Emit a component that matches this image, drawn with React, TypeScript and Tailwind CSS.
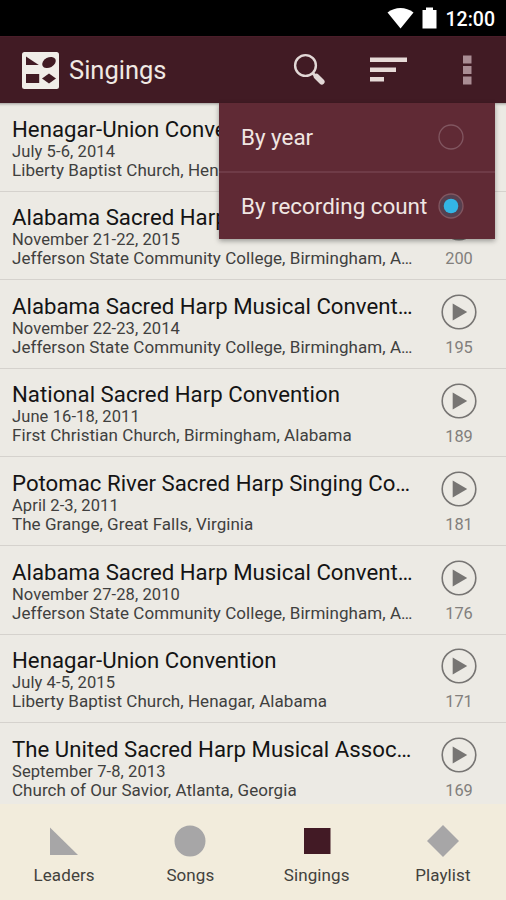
type Singing = {
  name: string;
  date: string;
  place: string;
  recordings: number;
};

const singings: Singing[] = [
  { name: 'Henagar-Union Convention', date: 'July 5-6, 2014', place: 'Liberty Baptist Church, Henagar, Alabama', recordings: 214 },
  { name: 'Alabama Sacred Harp Musical Convention', date: 'November 21-22, 2015', place: 'Jefferson State Community College, Birmingham, Alabama', recordings: 200 },
  { name: 'Alabama Sacred Harp Musical Convention', date: 'November 22-23, 2014', place: 'Jefferson State Community College, Birmingham, Alabama', recordings: 195 },
  { name: 'National Sacred Harp Convention', date: 'June 16-18, 2011', place: 'First Christian Church, Birmingham, Alabama', recordings: 189 },
  { name: 'Potomac River Sacred Harp Singing Convention', date: 'April 2-3, 2011', place: 'The Grange, Great Falls, Virginia', recordings: 181 },
  { name: 'Alabama Sacred Harp Musical Convention', date: 'November 27-28, 2010', place: 'Jefferson State Community College, Birmingham, Alabama', recordings: 176 },
  { name: 'Henagar-Union Convention', date: 'July 4-5, 2015', place: 'Liberty Baptist Church, Henagar, Alabama', recordings: 171 },
  { name: 'The United Sacred Harp Musical Association', date: 'September 7-8, 2013', place: 'Church of Our Savior, Atlanta, Georgia', recordings: 169 },
];

function StatusBar() {
  return (
    <div className="flex h-9 shrink-0 items-center justify-end bg-black pr-[11px] text-white">
      <svg className="h-[22px] w-[27px]" viewBox="0 0 27 22" fill="currentColor">
        <path d="M0.5 5.5C8 -0.5 19 -0.5 26.5 5.5L13.5 21.5Z" />
      </svg>
      <svg className="ml-2 h-[22px] w-[15px]" viewBox="0 0 15 22" fill="currentColor">
        <path d="M4 0.5H11V3H14.5V21.5H0.5V3H4Z" />
      </svg>
      <span className="ml-[9px] pt-[3px] text-[19.5px] leading-none font-medium">12:00</span>
    </div>
  );
}

function ActionBar() {
  return (
    <header className="flex h-[67px] shrink-0 items-center border-t border-[#4a1d29] bg-[#411b24] pl-[22px] text-[#f0e9e3]">
      <svg className="h-[37px] w-[37px]" viewBox="0 0 37 37">
        <rect width="37" height="37" rx="2.5" fill="#f0ede8" />
        <g fill="#411b24">
          <path d="M4 4.5L16.8 13H4Z" />
          <ellipse cx="27" cy="10.5" rx="7.2" ry="5" transform="rotate(-28 27 10.5)" />
          <path d="M4 22H17.2V31H4Z" />
          <path d="M20 26.5L27 21.5L34 26.5L27 31.5Z" />
        </g>
      </svg>
      <h1 className="ml-2.5 flex-1 pt-0.5 text-[25.5px] leading-none">Singings</h1>
      <svg className="h-[34px] w-[34px]" viewBox="0 0 34 34" fill="none" stroke="#e2d8d6">
        <circle cx="12.5" cy="12.5" r="10.4" strokeWidth="2.4" />
        <path d="M19.5 20L23.5 24" strokeWidth="3" />
        <path d="M23.5 23.5L28.8 28.8" strokeWidth="5.6" strokeLinecap="round" />
      </svg>
      <svg className="ml-[43px] h-[26px] w-[38px]" viewBox="0 0 38 26" fill="#e6dad7">
        <path d="M0 0.5H37V5H0ZM0 10.5H26V15H0ZM0 20H14V24.5H0Z" />
      </svg>
      <svg className="mr-[33px] ml-[55px] h-[30px] w-[10px]" viewBox="0 0 10 30" fill="#aa8d94">
        <path d="M0 0.5H8.5V8.5H0ZM0 11H8.5V19H0ZM0 21.5H8.5V29.5H0Z" />
      </svg>
    </header>
  );
}

function SingingRow({ singing }: { singing: Singing }) {
  return (
    <li className="flex h-[88.6px] shrink-0 border-b border-[#d5d2cd] pl-3">
      <div className="w-[404px] pt-[12.7px]">
        <h2 className="truncate pr-0.5 text-[22.2px] leading-[26px] tracking-[0.02px] text-[#141414]">{singing.name}</h2>
        <p className="truncate text-[16.5px] leading-[19px] tracking-[0.1px] text-[#40403e]">{singing.date}</p>
        <p className="truncate text-[17px] leading-[19px] tracking-[0.05px] text-[#40403e]">{singing.place}</p>
      </div>
      <div className="ml-[25px] flex w-9 flex-col items-center pt-[13.8px]">
        <svg className="h-9 w-9" viewBox="0 0 36 36">
          <circle cx="18" cy="18" r="16.8" fill="none" stroke="#777573" strokeWidth="1.6" />
          <path d="M11.7 9.5L26.2 18L11.7 26.5Z" fill="#777573" />
        </svg>
        <span className="mt-2 text-[16.4px] leading-[19px] text-[#827f7c]">{singing.recordings}</span>
      </div>
    </li>
  );
}

function SortOption({ label, checked }: { label: string; checked?: boolean }) {
  return (
    <div className="flex h-[68px] items-center justify-between pr-[31.5px] pl-[22px]">
      <span className="pt-0.5 text-[22.4px] whitespace-nowrap text-[#f0e6e3]">{label}</span>
      <svg className="h-[26px] w-[26px] shrink-0" viewBox="0 0 26 26">
        <circle cx="13" cy="13" r="12" fill={checked ? '#554050' : 'none'} stroke="#815660" strokeWidth="1.3" />
        {checked && <circle cx="13" cy="13" r="7.3" fill="#33b5e5" />}
      </svg>
    </div>
  );
}

function SortMenu() {
  return (
    <div className="absolute top-[103px] left-[219px] h-[136px] w-[276px] bg-[#602a35] shadow-[0_2px_5px_rgba(0,0,0,0.35)]">
      <SortOption label="By year" />
      <div className="h-0.5 bg-[#6f3b47]" />
      <div className="-mt-px">
        <SortOption label="By recording count" checked />
      </div>
    </div>
  );
}

const tabs = [
  { label: 'Leaders', color: '#a7a6a7', path: 'M2 2.5L30 30H2Z' },
  { label: 'Songs', color: '#a7a6a7', path: 'M16 0.5A15.5 15.5 0 1 1 16 31.5A15.5 15.5 0 1 1 16 0.5Z' },
  { label: 'Singings', color: '#421a25', path: 'M3 3H29.5V29H3Z' },
  { label: 'Playlist', color: '#a7a6a7', path: 'M16 0L32 16L16 32L0 16Z' },
];

function TabBar() {
  return (
    <nav className="grid h-24 shrink-0 grid-cols-4 bg-[#f2ecdc] pl-px">
      {tabs.map((tab) => (
        <div key={tab.label} className="flex flex-col items-center pt-[21px]">
          <svg className="h-8 w-8" viewBox="0 0 32 32" fill={tab.color}>
            <path d={tab.path} />
          </svg>
          <span className="mt-2 text-[17px] leading-5 tracking-[0.1px] text-[#42413c]">{tab.label}</span>
        </div>
      ))}
    </nav>
  );
}

export default function App() {
  return (
    <div className="relative flex h-[900px] w-[506px] flex-col overflow-hidden bg-[#eceae4] font-[Roboto,sans-serif]">
      <StatusBar />
      <ActionBar />
      <ul className="flex min-h-0 flex-1 flex-col overflow-hidden shadow-[inset_0_4px_3px_-3px_rgba(0,0,0,0.35)]">
        {singings.map((singing) => (
          <SingingRow key={singing.recordings} singing={singing} />
        ))}
      </ul>
      <TabBar />
      <SortMenu />
    </div>
  );
}
